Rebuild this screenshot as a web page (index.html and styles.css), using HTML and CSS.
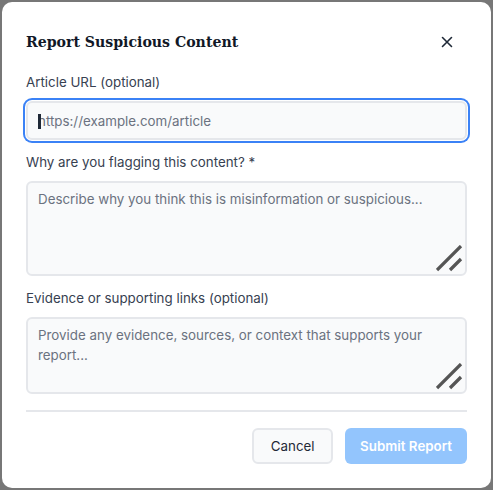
FILE: index.html
```html
<!DOCTYPE html>
<html lang="en">
<head>
<meta charset="utf-8">
<title>Report Suspicious Content</title>
<link rel="stylesheet" href="styles.css">
</head>
<body>
<div class="modal" role="dialog" aria-labelledby="dlg-title">
  <div class="header">
    <h2 id="dlg-title" class="title">Report Suspicious Content</h2>
    <button class="close" aria-label="Close">
      <svg width="12" height="12" viewBox="0 0 12 12"><path d="M1.5 1.5 L10.5 10.5 M10.5 1.5 L1.5 10.5" stroke="#1f2937" stroke-width="1.6" stroke-linecap="round" fill="none"/></svg>
    </button>
  </div>
  <form class="form">
    <div class="field">
      <label class="label" for="url">Article URL (optional)</label>
      <div class="control">
        <input id="url" class="input focused" type="text" placeholder="https://example.com/article">
        <span class="caret"></span>
      </div>
    </div>
    <div class="field">
      <label class="label" for="why">Why are you flagging this content? *</label>
      <div class="control">
        <textarea id="why" class="textarea tall" placeholder="Describe why you think this is misinformation or suspicious..."></textarea>
        <svg class="grip" width="28" height="28" viewBox="0 0 28 28"><path d="M1 25 L25 1 M14 25 L25 14" stroke="#555555" stroke-width="3.2" fill="none"/></svg>
      </div>
    </div>
    <div class="field last">
      <label class="label" for="evidence">Evidence or supporting links (optional)</label>
      <div class="control">
        <textarea id="evidence" class="textarea short" placeholder="Provide any evidence, sources, or context that supports your report..."></textarea>
        <svg class="grip" width="28" height="28" viewBox="0 0 28 28"><path d="M1 25 L25 1 M14 25 L25 14" stroke="#555555" stroke-width="3.2" fill="none"/></svg>
      </div>
    </div>
    <div class="footer">
      <button type="button" class="btn btn-cancel">Cancel</button>
      <button type="button" class="btn btn-submit" disabled>Submit Report</button>
    </div>
  </form>
</div>
</body>
</html>
```
FILE: styles.css
```css
* { box-sizing: border-box; }
html, body { margin: 0; height: 100%; }
body {
  background: #777777;
  padding: 2px;
  font-family: Inter, "Noto Sans", sans-serif;
  overflow: hidden;
}
.modal {
  width: 489px;
  background: #ffffff;
  border-radius: 10px;
  padding: 24px;
}
.header {
  display: flex;
  align-items: center;
  justify-content: space-between;
  margin-bottom: 13px;
}
.title {
  margin: 0;
  font-family: "DejaVu Serif Condensed", "DejaVu Serif", serif;
  font-stretch: condensed;
  font-weight: 700;
  font-size: 15.7px;
  line-height: 32px;
  color: #111827;
}
.close {
  width: 28px;
  height: 28px;
  margin-right: 6px;
  border: 0;
  background: transparent;
  display: flex;
  align-items: center;
  justify-content: center;
  padding: 0;
}
.form { display: flex; flex-direction: column; }
.field { display: flex; flex-direction: column; margin-bottom: 11px; }
.field.last { margin-bottom: 12px; }
.label {
  font-size: 13.35px;
  line-height: 22px;
  color: #374151;
  margin-bottom: 8px;
}
.control { position: relative; display: flex; }
.input, .textarea {
  width: 100%;
  border: 2px solid #e5e7eb;
  border-radius: 6px;
  background: #f9fafb;
  font-family: Inter, "Noto Sans", sans-serif;
  font-size: 13.35px;
  color: #111827;
  padding: 0 10px;
  outline: none;
  margin: 0;
}
.input { height: 39px; line-height: 20px; }
.input::placeholder, .textarea::placeholder { color: #6b7280; opacity: 1; }
.focused { box-shadow: 0 0 0 1px #ffffff, 0 0 0 3px #3b82f6; }
.caret {
  position: absolute;
  left: 12px;
  top: 13px;
  width: 3px;
  height: 15px;
  background: #1f2937;
}
.textarea {
  resize: none;
  padding: 7px 10px;
  line-height: 19.5px;
  display: block;
}
.tall { height: 95px; }
.short { height: 77px; }
.grip {
  position: absolute;
  right: 3px;
  bottom: 3px;
}
.footer {
  border-top: 2px solid #e5e7eb;
  margin-top: 4px;
  padding-top: 16px;
  display: flex;
  justify-content: flex-end;
  gap: 12px;
}
.btn {
  height: 36px;
  border-radius: 6px;
  font-family: Inter, "Noto Sans", sans-serif;
  font-size: 13.35px;
}
.btn-cancel {
  border: 2px solid #e5e7eb;
  background: #f9fafb;
  color: #1f2937;
  font-weight: 400;
  padding: 0 16.5px;
}
.btn-submit {
  border: 0;
  background: #93c5fd;
  color: #ffffff;
  font-weight: 600;
  padding: 0 15px;
}
```
